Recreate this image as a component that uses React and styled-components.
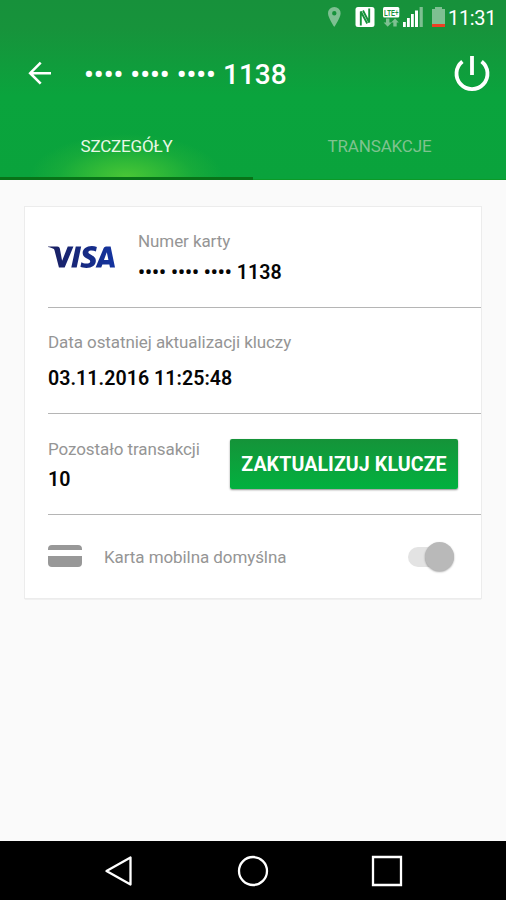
import React from "react";
import styled, { createGlobalStyle } from "styled-components";
import { SiVisa } from "react-icons/si";

const GlobalStyle = createGlobalStyle`
  * { box-sizing: border-box; }
  html, body { margin: 0; padding: 0; }
  body { font-family: Roboto, "Noto Sans", sans-serif; background: #fafafa; }
`;

const Screen = styled.div`
  display: flex;
  flex-direction: column;
  width: 506px;
  height: 900px;
  overflow: hidden;
  background: #fafafa;
`;

const Header = styled.header`
  display: flex;
  flex-direction: column;
  height: 180px;
  flex: none;
  color: #fff;
  background: linear-gradient(#17913b 0, #17933b 28px, #0aa43d 96px, #0aa33c 100%);
`;

const StatusBar = styled.div`
  display: flex;
  align-items: flex-start;
  height: 36px;
  padding-left: 326px;
`;

const StatusIcons = styled.svg`
  display: block;
  flex: none;
`;

const Clock = styled.span`
  margin: 5px 0 0 2px;
  font-size: 20px;
  line-height: 26px;
  letter-spacing: -0.35px;
`;

const AppBar = styled.div`
  display: flex;
  align-items: center;
  height: 76px;
  padding: 0 16px 0 26px;
`;

const Title = styled.h1`
  flex: 1;
  margin: 1px 0 0 31px;
  font-size: 28px;
  line-height: 34px;
  font-weight: 500;
  letter-spacing: 0.04px;
  white-space: pre;
`;

const IconButton = styled.button`
  display: flex;
  padding: 0;
  border: 0;
  background: none;
  color: inherit;
`;

const Tabs = styled.nav`
  display: flex;
  height: 68px;
  border-bottom: 1px solid #0c9a27;
`;

const Tab = styled.button`
  flex: 1;
  height: 68px;
  padding: 3px 0 0;
  border: 0;
  border-bottom: 3px solid ${(p) => (p.$active ? "#087318" : "transparent")};
  background: ${(p) =>
    p.$active
      ? "radial-gradient(ellipse 112px 50px at 50% 100%, #49c736 0%, rgba(60,192,54,.8) 28%, rgba(40,180,56,.42) 60%, rgba(10,163,60,.1) 86%, rgba(10,163,60,0) 100%) padding-box"
      : "none"};
  color: ${(p) => (p.$active ? "#e9f8e6" : "#7fc28f")};
  font: 400 17px/20px Roboto, sans-serif;
  letter-spacing: ${(p) => (p.$active ? "-0.2px" : "-0.15px")};
`;

const Content = styled.main`
  flex: 1;
  padding: 27px 25px 0;
`;

const Card = styled.section`
  height: 391px;
  padding-left: 23px;
  background: #fff;
  box-shadow: 0 0 0 1px #ececec, 0 1px 1px 0 #bdbdbd;
`;

const Row = styled.div`
  display: flex;
  height: ${(p) => p.$height}px;
  align-items: ${(p) => (p.$center ? "center" : "flex-start")};
  padding-right: 23px;
  border-bottom: ${(p) => (p.$last ? "0" : "1px solid #b5b5b5")};
`;

const Field = styled.div`
  flex: 1;
  padding-top: ${(p) => p.$top}px;
  white-space: nowrap;
`;

const Label = styled.div`
  color: #959595;
  font-size: 17px;
  line-height: 20px;
  letter-spacing: -0.08px;
`;

const Value = styled.div`
  margin-top: ${(p) => p.$gap}px;
  color: #050505;
  font-size: 19.6px;
  line-height: 24px;
  font-weight: 600;
  letter-spacing: 0.05px;
  white-space: pre;
`;

const VisaMark = styled.div`
  width: 90px;
  padding-top: 39px;
`;

const VisaGradient = styled.svg`
  display: block;
  width: 0;
  height: 0;
`;

const VisaLogo = styled(SiVisa)`
  display: block;
  width: 67px;
  height: 22px;
`;

const UpdateButton = styled.button`
  width: 228px;
  height: 50px;
  flex: none;
  margin-top: 25px;
  padding: 2px 0 0;
  border: 0;
  border-radius: 2px;
  background: linear-gradient(#159339, #02b13f);
  box-shadow: 0 1px 2px rgba(0, 0, 0, 0.45);
  color: #fff;
  font: 700 19.6px/24px Roboto, sans-serif;
  letter-spacing: 0.08px;
  white-space: nowrap;
`;

const CardGlyph = styled.svg`
  display: block;
  flex: none;
  margin-bottom: 2px;
`;

const DefaultLabel = styled(Label)`
  flex: 1;
  margin-left: 22px;
`;

const Switch = styled.div`
  display: flex;
  align-items: center;
  justify-content: flex-end;
  width: 46px;
  height: 20px;
  margin-right: 4.5px;
  border-radius: 10px;
  background: #e3e3e3;
`;

const Thumb = styled.div`
  width: 29px;
  height: 29px;
  flex: none;
  border-radius: 50%;
  background: #b9b9b9;
  box-shadow: 0 1px 2px rgba(0, 0, 0, 0.35);
`;

const NavBar = styled.footer`
  display: flex;
  align-items: center;
  justify-content: center;
  gap: 102px;
  height: 59px;
  flex: none;
  background: #000;
`;

function StatusGlyphs() {
  return (
    <StatusIcons width="120" height="32" viewBox="326 0 120 32">
      <path fill="#7ec092" fillRule="evenodd" d="M334.3 7a6.3 6.3 0 0 0-6.3 6.3c0 4.6 6.3 13.7 6.3 13.7s6.3-9.1 6.3-13.7a6.3 6.3 0 0 0-6.3-6.3m0 4a2.2 2.2 0 1 1 0 4.4 2.2 2.2 0 0 1 0-4.4" />
      <rect x="355.5" y="7" width="19" height="20" rx="2.5" fill="#fff" />
      <path fill="none" stroke="#17933b" strokeWidth="1.9" d="M360.8 25.5V11.5l6.4 12M369.2 8.5v14l-6.2-12" />
      <rect x="383" y="7" width="16.3" height="10.5" rx="1.5" fill="#fff" />
      <text x="384" y="15.5" fontFamily="Liberation Sans, sans-serif" fontSize="9" fontWeight="700" fill="#17933b" textLength="14.6" lengthAdjust="spacingAndGlyphs">LTE+</text>
      <path fill="#7ec092" d="M386 18.4h3.4v4h2.4l-4.1 4.3-4.1-4.3h2.4zM393.3 26.6h3.4v-4h2.1l-3.8-4.2-3.8 4.2h2.1z" />
      <path fill="#fff" d="M403 22h2.8v5H403zM407 18h2.8v9H407zM411 14h2.8v13H411zM415 10.5h3V27h-3z" />
      <path fill="#7ec092" d="M419.6 7h3.2v20h-3.2zM435 7h7v2h3v15h-13V9h3z" />
      <path fill="#ee4023" d="M432 24h13v3h-13z" />
    </StatusIcons>
  );
}

export default function App() {
  return (
    <>
      <GlobalStyle />
      <Screen>
        <Header>
          <StatusBar>
            <StatusGlyphs />
            <Clock>11:31</Clock>
          </StatusBar>
          <AppBar>
            <IconButton aria-label="Wstecz">
              <svg width="27" height="26" viewBox="26 61 27 26" fill="none" stroke="#fff" strokeWidth="2.6">
                <path d="M51 73.2H30M40.7 62.7L30.2 73.2l10.5 10.5" />
              </svg>
            </IconButton>
            <Title>•••• •••• •••• 1138</Title>
            <IconButton aria-label="Wyłącz">
              <svg width="36" height="38" viewBox="454 55 36 38" fill="none" stroke="#fff" strokeWidth="3.8">
                <path d="M472 56v19M462.4 61.4a15.5 15.5 0 1 0 19.2 0" />
              </svg>
            </IconButton>
          </AppBar>
          <Tabs>
            <Tab $active>SZCZEGÓŁY</Tab>
            <Tab>TRANSAKCJE</Tab>
          </Tabs>
        </Header>
        <Content>
          <Card>
            <Row $height={101}>
              <VisaMark>
                <VisaGradient>
                  <linearGradient id="visaBlue" x1="0" y1="0" x2="1" y2="0">
                    <stop offset="0" stopColor="#1a1f60" />
                    <stop offset="1" stopColor="#1434a0" />
                  </linearGradient>
                </VisaGradient>
                <VisaLogo viewBox="0 8.1 24 7.8" preserveAspectRatio="none" fill="url(#visaBlue)" />
              </VisaMark>
              <Field $top={24}>
                <Label>Numer karty</Label>
                <Value $gap={10}>•••• •••• •••• 1138</Value>
              </Field>
            </Row>
            <Row $height={106}>
              <Field $top={24}>
                <Label>Data ostatniej aktualizacji kluczy</Label>
                <Value $gap={15}>03.11.2016 11:25:48</Value>
              </Field>
            </Row>
            <Row $height={101}>
              <Field $top={25}>
                <Label>Pozostało transakcji</Label>
                <Value $gap={9}>10</Value>
              </Field>
              <UpdateButton>ZAKTUALIZUJ KLUCZE</UpdateButton>
            </Row>
            <Row $height={83} $center $last>
              <CardGlyph width="34" height="22" viewBox="0 0 34 22" fill="#989898">
                <path d="M0 5V4a4 4 0 0 1 4-4h26a4 4 0 0 1 4 4v1zM0 11h34v7a4 4 0 0 1-4 4H4a4 4 0 0 1-4-4z" />
              </CardGlyph>
              <DefaultLabel>Karta mobilna domyślna</DefaultLabel>
              <Switch>
                <Thumb />
              </Switch>
            </Row>
          </Card>
        </Content>
        <NavBar>
          <svg width="32" height="32" viewBox="-1 0 32 32" fill="none" stroke="#fff" strokeWidth="2.3">
            <path d="M26.5 2.5v27L2.5 16z" strokeLinejoin="round" />
          </svg>
          <svg width="32" height="32" viewBox="0 0 32 32" fill="none" stroke="#fff" strokeWidth="2.3">
            <circle cx="16" cy="16" r="14" />
          </svg>
          <svg width="32" height="32" viewBox="0 0 32 32" fill="none" stroke="#fff" strokeWidth="2.3">
            <path d="M2 2h28v28H2z" />
          </svg>
        </NavBar>
      </Screen>
    </>
  );
}
